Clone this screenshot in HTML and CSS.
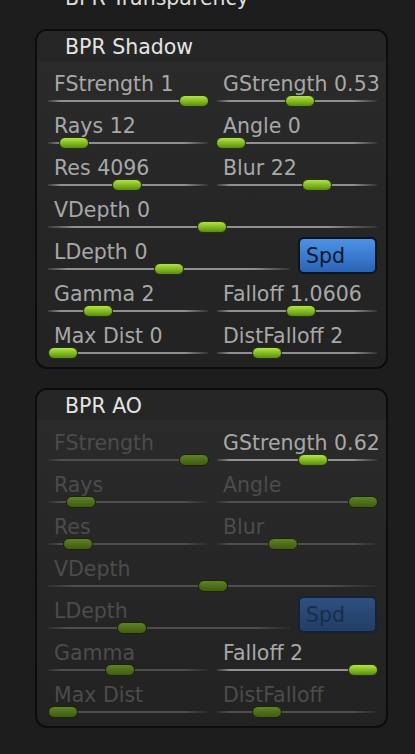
FILE: index.html
```html
<!DOCTYPE html>
<html>
  <head>
    <meta charset="utf-8" />
    <title>BPR Settings</title>
    <link rel="stylesheet" href="styles.css">
  </head>
  <body>
    <div id="main">
      <div class="cut-title">BPR Transparency</div>

      <div class="panel">
        <div class="panel-head">BPR Shadow</div>
        <div class="rows">
          <div class="cell">
            <div class="label">FStrength 1</div>
            <div class="slider"><span class="knob" style="left:131px"></span></div>
          </div>
          <div class="cell">
            <div class="label">GStrength 0.53</div>
            <div class="slider"><span class="knob" style="left:68px"></span></div>
          </div>
          <div class="cell">
            <div class="label">Rays 12</div>
            <div class="slider"><span class="knob" style="left:11px"></span></div>
          </div>
          <div class="cell">
            <div class="label">Angle 0</div>
            <div class="slider"><span class="knob" style="left:-1px"></span></div>
          </div>
          <div class="cell">
            <div class="label">Res 4096</div>
            <div class="slider"><span class="knob" style="left:64px"></span></div>
          </div>
          <div class="cell">
            <div class="label">Blur 22</div>
            <div class="slider"><span class="knob" style="left:85px"></span></div>
          </div>
          <div class="cell wide">
            <div class="label">VDepth 0</div>
            <div class="slider"><span class="knob" style="left:149px"></span></div>
          </div>
          <div class="wide split">
            <div class="cell">
              <div class="label">LDepth 0</div>
              <div class="slider"><span class="knob" style="left:106px"></span></div>
            </div>
            <button class="spd">Spd</button>
          </div>
          <div class="cell">
            <div class="label">Gamma 2</div>
            <div class="slider"><span class="knob" style="left:35px"></span></div>
          </div>
          <div class="cell">
            <div class="label">Falloff 1.0606</div>
            <div class="slider"><span class="knob" style="left:69px"></span></div>
          </div>
          <div class="cell">
            <div class="label">Max Dist 0</div>
            <div class="slider"><span class="knob" style="left:0px"></span></div>
          </div>
          <div class="cell">
            <div class="label">DistFalloff 2</div>
            <div class="slider"><span class="knob" style="left:35px"></span></div>
          </div>
        </div>
      </div>

      <div class="panel">
        <div class="panel-head">BPR AO</div>
        <div class="rows">
          <div class="cell off">
            <div class="label">FStrength</div>
            <div class="slider"><span class="knob" style="left:131px"></span></div>
          </div>
          <div class="cell">
            <div class="label">GStrength 0.62</div>
            <div class="slider"><span class="knob" style="left:81px"></span></div>
          </div>
          <div class="cell off">
            <div class="label">Rays</div>
            <div class="slider"><span class="knob" style="left:18px"></span></div>
          </div>
          <div class="cell off">
            <div class="label">Angle</div>
            <div class="slider"><span class="knob" style="left:131px"></span></div>
          </div>
          <div class="cell off">
            <div class="label">Res</div>
            <div class="slider"><span class="knob" style="left:15px"></span></div>
          </div>
          <div class="cell off">
            <div class="label">Blur</div>
            <div class="slider"><span class="knob" style="left:51px"></span></div>
          </div>
          <div class="cell wide off">
            <div class="label">VDepth</div>
            <div class="slider"><span class="knob" style="left:150px"></span></div>
          </div>
          <div class="wide split">
            <div class="cell off">
              <div class="label">LDepth</div>
              <div class="slider"><span class="knob" style="left:69px"></span></div>
            </div>
            <button class="spd off">Spd</button>
          </div>
          <div class="cell off">
            <div class="label">Gamma</div>
            <div class="slider"><span class="knob" style="left:57px"></span></div>
          </div>
          <div class="cell">
            <div class="label">Falloff 2</div>
            <div class="slider"><span class="knob" style="left:131px"></span></div>
          </div>
          <div class="cell off">
            <div class="label">Max Dist</div>
            <div class="slider"><span class="knob" style="left:0px"></span></div>
          </div>
          <div class="cell off">
            <div class="label">DistFalloff</div>
            <div class="slider"><span class="knob" style="left:35px"></span></div>
          </div>
        </div>
      </div>
    </div>
  </body>
</html>
```
FILE: styles.css
```css
body {
  margin: 0;
  background-color: #1d1d1d;
  font: 20.5px 'DejaVu Sans', sans-serif;
  color: #a8a8a8;
  overflow: hidden;
}
#main {
  padding-left: 35px;
}
.cut-title {
  height: 30px;
  line-height: 30px;
  margin-top: -17px;
  margin-bottom: 16px;
  padding-left: 30px;
  color: #dedede;
}
.panel {
  width: 349px;
  border: 2px solid #0c0c0c;
  border-radius: 12px;
  overflow: hidden;
  margin-bottom: 19px;
  background: linear-gradient(#2b2b2b, #222);
}
.panel-head {
  height: 30px;
  line-height: 30px;
  padding: 1px 0 0 28px;
  box-sizing: border-box;
  background-color: #262626;
  color: #e4e4e4;
}
.rows {
  display: grid;
  grid-template-columns: 160px 160px;
  column-gap: 9px;
  row-gap: 8px;
  padding: 12px 9px 8px 11px;
}
.cell {
  display: flex;
  flex-direction: column;
}
.wide {
  grid-column: 1 / -1;
}
.split {
  display: flex;
  align-items: flex-start;
}
.split .cell {
  flex: 1;
}
.label {
  height: 22px;
  line-height: 22px;
  padding-left: 6px;
  white-space: nowrap;
}
.slider {
  position: relative;
  height: 12px;
}
.slider::before {
  content: '';
  position: absolute;
  left: 0;
  right: 0;
  top: 5px;
  height: 2px;
  background: linear-gradient(to right, #3a3a3a, #909090 8%, #909090 85%, #333);
}
.knob {
  position: absolute;
  top: 0;
  width: 28px;
  height: 10px;
  border: 1px solid #25330b;
  border-radius: 6px;
  background: linear-gradient(#b4e248, #8dc42a 40%, #74a91c 70%, #5a8a12);
}
.spd {
  width: 79px;
  height: 37px;
  margin: -4px 0 0 8px;
  padding: 0 0 0 6px;
  text-align: left;
  font: 20.5px 'DejaVu Sans', sans-serif;
  color: #0c1a2e;
  border: 2px solid #0a1420;
  border-radius: 6px;
  background: linear-gradient(#4d93e6, #3b7bd0 50%, #2b62b2);
}
.off .label {
  color: #4c4c4c;
}
.off .slider::before {
  background: linear-gradient(to right, #2e2e2e, #4e4e4e 8%, #4e4e4e 85%, #2a2a2a);
}
.off .knob {
  border-color: #1b2409;
  background: linear-gradient(#5f8426, #4d6e1b 50%, #3f5d14);
}
.spd.off {
  color: #1a2d48;
  border-color: #13223a;
  background: linear-gradient(#2f5080, #284672 50%, #223e66);
}
```
